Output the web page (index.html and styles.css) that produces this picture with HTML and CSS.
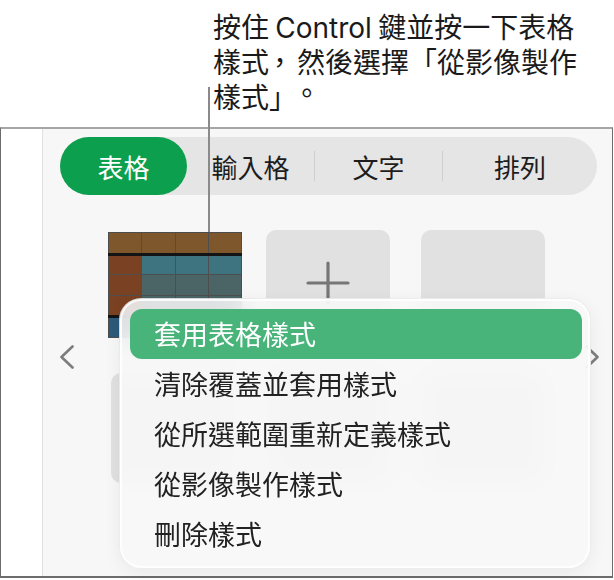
FILE: index.html
```html
<!DOCTYPE html>
<html lang="zh-TW">
<head>
    <meta charset="UTF-8">
    <meta name="viewport" content="width=device-width, initial-scale=1.0">
    <title>表格樣式</title>
    <link rel="stylesheet" href="styles.css">
</head>
<body>
    <div class="callout">
        <span class="line">按住 <span class="latin">Control</span> 鍵並按一下表格</span>
        <span class="line">樣式<span class="punct comma">，</span>然後選擇「從影像製作</span>
        <span class="line">樣式」<span class="punct stop">。</span></span>
    </div>
    <div class="leader"></div>

    <div class="panel">
        <div class="gutter"></div>
        <div class="main">
            <div class="tabs">
                <div class="tab active">表格</div>
                <div class="tab">輸入格</div>
                <span class="divider"></span>
                <div class="tab">文字</div>
                <span class="divider"></span>
                <div class="tab wide">排列</div>
            </div>

            <div class="styles">
                <svg class="chev" width="14" height="24" viewBox="0 0 14 24">
                    <polyline points="12.5,1.5 1.5,12 12.5,22.5" fill="none" stroke="#7d7d7d" stroke-width="2.6" stroke-linecap="round" stroke-linejoin="round"/>
                </svg>
                <div class="grid">
                    <div class="cell table-cell">
                        <table class="thumb">
                            <tr class="head"><td></td><td></td><td></td><td></td></tr>
                            <tr class="r1"><td class="first"></td><td></td><td></td><td></td></tr>
                            <tr class="r2"><td class="first"></td><td></td><td></td><td></td></tr>
                            <tr class="r3"><td class="first"></td><td></td><td></td><td></td></tr>
                            <tr class="foot"><td></td><td></td><td></td><td></td></tr>
                        </table>
                    </div>
                    <div class="cell blank">
                        <svg width="44" height="44" viewBox="0 0 44 44">
                            <path d="M22 2v40M2 22h40" stroke="#767676" stroke-width="3.2" stroke-linecap="round"/>
                        </svg>
                    </div>
                    <div class="cell blank"></div>
                    <div class="cell blank"></div>
                    <div class="cell blank"></div>
                    <div class="cell blank"></div>
                </div>
                <svg class="chev chev-right" width="14" height="24" viewBox="0 0 14 24">
                    <polyline points="1.5,1.5 12.5,12 1.5,22.5" fill="none" stroke="#7d7d7d" stroke-width="2.6" stroke-linecap="round" stroke-linejoin="round"/>
                </svg>
            </div>
        </div>

        <div class="menu">
            <div class="item selected">套用表格樣式</div>
            <div class="item">清除覆蓋並套用樣式</div>
            <div class="item">從所選範圍重新定義樣式</div>
            <div class="item">從影像製作樣式</div>
            <div class="item">刪除樣式</div>
        </div>
    </div>
</body>
</html>
```

FILE: styles.css
```css
* { box-sizing: border-box; }
body { margin: 0; width: 614px; height: 580px; overflow: hidden; position: relative; background: #fff; color: #1d1d1d; font-family: "Noto Sans CJK TC", "Noto Sans CJK KR", sans-serif; }

/* callout above the panel */
.callout { height: 127px; padding: 9px 0 0 213px; font-size: 28px; line-height: 35px; color: #1a1a1a; text-spacing-trim: space-all; }
.line { display: block; height: 35px; white-space: nowrap; }
.latin { font-family: "Inter", sans-serif; }
.punct { display: inline-block; }
.comma { transform: translateX(-0.12em); }
.stop { margin-left: -0.15em; transform: translateY(-0.14em); }
.leader { position: absolute; left: 208px; top: 87px; width: 2px; height: 145px; background: #8a8a8a; z-index: 5; }

/* panel */
.panel { position: relative; display: flex; width: 613px; height: 451px; border: 1px solid #6c6c6c; border-top: 2px solid #a6a6a6; border-bottom-width: 2px; background: #f7f7f7; }
.gutter { width: 42px; background: #fff; border-right: 1px solid #e1e1e1; }
.main { flex: 1; padding-top: 8px; }

/* segmented control */
.tabs { display: flex; width: 537px; height: 58px; margin-left: 17px; background: #e5e5e5; border-radius: 29px; }
.tab { width: 127px; display: flex; align-items: center; justify-content: center; font-size: 26px; color: #1d1d1d; }
.tab.active { background: #0c9f4e; color: #fff; border-radius: 29px; }
.tab.wide { flex: 1; }
.divider { width: 1px; height: 30px; align-self: center; background: #cfcfcf; }

/* style thumbnails */
.styles { display: flex; align-items: center; margin-top: 35px; padding-left: 17px; }
.grid { display: grid; grid-template-columns: repeat(3, 124px); grid-auto-rows: 110px; column-gap: 31px; row-gap: 33px; margin-left: 37px; }
.chev-right { margin-left: 40px; }
.cell { display: flex; align-items: center; justify-content: center; }
.cell.blank { background: #e1e1e1; border-radius: 10px; }
.cell.blank svg { margin-top: -4px; }
.table-cell { justify-content: flex-start; align-items: flex-start; padding-top: 2px; }

.thumb { border-collapse: collapse; table-layout: fixed; width: 134px; height: 106px; margin-left: -3px; border: 1px solid #666; flex: none; }
.thumb td { width: 33px; padding: 0; border: 1px solid #4e4e4e; background: #4b6466; }
.thumb .head td { height: 21px; background: #7e582c; border-bottom: 3px solid #141414; }
.thumb .r1 td { height: 19px; background: #3e7480; }
.thumb .r2 td, .thumb .r3 td { height: 20px; }
.thumb td.first { background: #7a4122; }
.thumb .foot td { height: 20px; background: #2c5a78; border-top: 3px solid #141414; }

/* context menu */
.menu { position: absolute; left: 118px; top: 169px; width: 472px; height: 271px; padding: 10px 8px 10px 10px; border-radius: 22px; background: rgba(248, 248, 248, 0.86); backdrop-filter: blur(14px); border: 1px solid rgba(0, 0, 0, 0.05); box-shadow: inset 0 0 0 2px rgba(255, 255, 255, 0.85), 0 4px 18px rgba(0, 0, 0, 0.06); z-index: 4; }
.item { height: 50px; line-height: 50px; padding-left: 24px; font-size: 27px; color: #222; white-space: nowrap; }
.item.selected { background: #48b47a; color: #fff; border-radius: 12px; }
```
